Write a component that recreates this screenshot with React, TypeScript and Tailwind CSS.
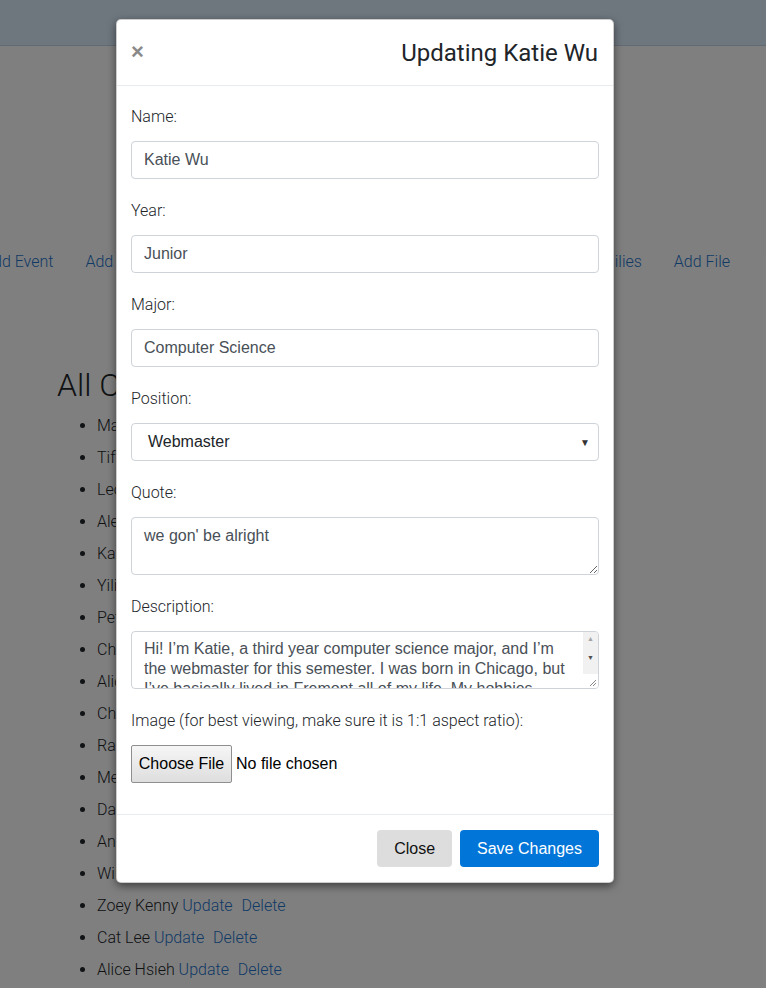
import React from "react";

const names = [
  "Maya Lin",
  "Tiffany Chen",
  "Leo Park",
  "Alex Kim",
  "Katie Wu",
  "Yilin Zhang",
  "Peter Liu",
  "Christine Ho",
  "Alice Wang",
  "Chris Tan",
  "Rachel Lee",
  "Megan Yu",
  "David Chen",
  "Andrew Li",
  "William Ng",
  "Zoey Kenny",
  "Cat Lee",
  "Alice Hsieh",
];

const roboto = { fontFamily: "Roboto, 'Liberation Sans', sans-serif" };
const arial = { fontFamily: "'Liberation Sans', Arial, sans-serif" };

function Label({ children }: { children: React.ReactNode }) {
  return (
    <div className="h-[24px] leading-[24px] mb-[12px] text-[16px] font-light text-[#212529]" style={roboto}>
      {children}
    </div>
  );
}

function TextInput({ value }: { value: string }) {
  return (
    <div
      className="h-[38px] w-full border border-[#ced4da] rounded-[4px] px-[12px] flex items-center text-[16px] text-[#495057] bg-white"
      style={arial}
    >
      {value}
    </div>
  );
}

export default function App() {
  return (
    <div className="relative min-h-[988px] w-full bg-white overflow-hidden" style={roboto}>
      {/* underlying page */}
      <div className="h-[46px] bg-[#dcecfc] border-b border-[#c4d4e4]" />
      <div className="h-[204px]" />
      <div className="flex justify-between ml-[-17px] w-[747px] h-[24px] leading-[24px] text-[16px] font-light text-[#1f74cc] whitespace-nowrap">
        <div className="flex gap-8">
          <span>Add Event</span>
          <span>Add Officer</span>
        </div>
        <span>Add Photo</span>
        <div className="flex gap-8">
          <span>Add Families</span>
          <span>Add File</span>
        </div>
      </div>
      <div className="h-[92px]" />
      <div className="pl-[57px]">
        <h1 className="text-[32px] leading-[38px] font-light text-[#212529]">All Committee Members</h1>
        <ul className="list-disc pl-[40px] mt-[6px] text-[16px] font-light text-[#212529]">
          {names.map((n) => (
            <li key={n} className="leading-[32px]">
              {n} <span className="text-[#1f74cc]">Update</span>{" "}
              <span className="text-[#1f74cc] ml-[5px]">Delete</span>
            </li>
          ))}
        </ul>
      </div>

      {/* overlay */}
      <div className="absolute inset-0 bg-black/50" />

      {/* modal */}
      <div className="absolute left-[116px] top-[19px] w-[498px] bg-white border border-black/20 rounded-[5px] shadow-[0_3px_9px_rgba(0,0,0,0.5)]">
        <div className="h-[66px] border-b border-[#e9ecef] flex items-center justify-between pl-[14px] pr-[15px]">
          <span className="text-[22px] font-bold text-[#8a8a8a] leading-none mt-[-2px]" style={arial}>
            ×
          </span>
          <span className="text-[24px] font-normal text-[#212529] leading-[30px]" style={roboto}>
            Updating Katie Wu
          </span>
        </div>
        <div className="pt-[19px] pb-[31px] px-[14px]">
          <div className="mb-[20px]">
            <Label>Name:</Label>
            <TextInput value="Katie Wu" />
          </div>
          <div className="mb-[20px]">
            <Label>Year:</Label>
            <TextInput value="Junior" />
          </div>
          <div className="mb-[20px]">
            <Label>Major:</Label>
            <TextInput value="Computer Science" />
          </div>
          <div className="mb-[20px]">
            <Label>Position:</Label>
            <div
              className="h-[38px] w-full border border-[#ced4da] rounded-[4px] pl-[16px] pr-[8px] flex items-center justify-between text-[16px] text-[#212529] bg-white"
              style={arial}
            >
              <span>Webmaster</span>
              <span className="text-[10px] text-[#333]">▼</span>
            </div>
          </div>
          <div className="mb-[20px]">
            <Label>Quote:</Label>
            <div className="relative">
              <textarea
                readOnly
                defaultValue="we gon' be alright"
                className="block h-[58px] w-full border border-[#ced4da] rounded-[4px] px-[12px] pt-[8px] pb-[6px] text-[16px] leading-[20px] text-[#495057] bg-white resize-y outline-none"
                style={arial}
              />
            </div>
          </div>
          <div className="mb-[20px]">
            <Label>Description:</Label>
            <div className="relative h-[58px] w-full border border-[#ced4da] rounded-[4px] bg-white overflow-hidden">
              <div
                className="h-[56px] overflow-hidden pl-[12px] pr-[27px] pt-[7px] text-[16px] leading-[20px] text-[#495057]"
                style={arial}
              >
                Hi! I’m Katie, a third year computer science major, and I’m the webmaster for this semester. I was born in Chicago, but I’ve basically lived in Fremont all of my life. My hobbies
              </div>
              <div className="absolute right-0 top-0 bottom-0 w-[15px] bg-[#f1f1f1] flex flex-col items-center">
                <span className="text-[7px] leading-[15px] text-[#a3a3a3]">▲</span>
                <span className="text-[7px] leading-[15px] text-[#505050] mt-[4px]">▼</span>
                <div className="mt-auto h-[14px] w-full bg-white" />
              </div>
              <svg className="absolute right-[1px] bottom-[1px]" width="8" height="8" viewBox="0 0 8 8">
                <line x1="1" y1="7" x2="7" y2="1" stroke="#8a8a8a" strokeWidth="1" />
                <line x1="4" y1="7" x2="7" y2="4" stroke="#8a8a8a" strokeWidth="1" />
              </svg>
            </div>
          </div>
          <div>
            <Label>Image (for best viewing, make sure it is 1:1 aspect ratio):</Label>
            <div className="flex items-center text-[16px] text-black" style={arial}>
              <div className="h-[38px] w-[101px] flex items-center justify-center border border-[#8f8f8f] rounded-[2px] bg-gradient-to-b from-[#f6f6f6] to-[#dedede]">
                Choose File
              </div>
              <span className="ml-[4px]">No file chosen</span>
            </div>
          </div>
        </div>
        <div className="border-t border-[#e9ecef] pt-[15px] pb-[15px] px-[14px] flex justify-end gap-[8px]">
          <button
            className="h-[37px] px-[17px] rounded-[4px] bg-[#dddddd] text-[16px] text-[#111]"
            style={arial}
          >
            Close
          </button>
          <button
            className="h-[37px] px-[17px] rounded-[4px] bg-[#0275d8] text-[16px] text-white"
            style={arial}
          >
            Save Changes
          </button>
        </div>
      </div>
    </div>
  );
}
